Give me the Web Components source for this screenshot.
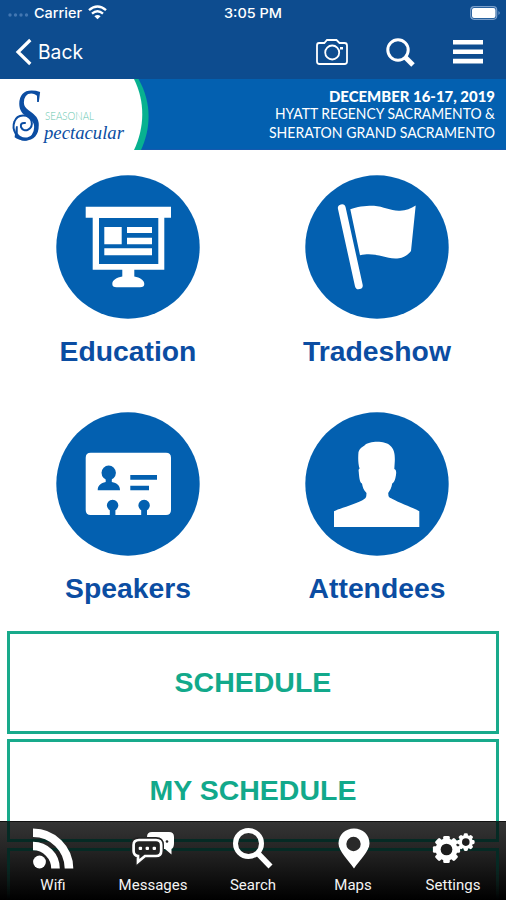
<!DOCTYPE html>
<html lang="en">
<head>
<meta charset="utf-8">
<title>Seasonal Spectacular</title>
<style>
html,body{margin:0;height:900px;overflow:hidden;background:#fff;font-family:"Liberation Sans",Arial,sans-serif}
</style>
</head>
<body>
<event-app></event-app>
<script>
const define = (name, html) => customElements.define(name, class extends HTMLElement {
  constructor() {
    super();
    this.attachShadow({mode: 'open'}).innerHTML = html;
  }
});

/* One line of text fitted to an exact width; the baseline lies on the bottom edge of the box. */
customElements.define('fit-text', class extends HTMLElement {
  connectedCallback() {
    const w = +this.getAttribute('width'), size = +this.getAttribute('size');
    const root = this.attachShadow({mode: 'open'});
    root.innerHTML = `<style>:host{display:block;width:${w}px;height:${size}px}svg{display:block;overflow:visible;margin:-4px -4px 0}</style>
      <svg width="${w + 8}" height="${size * 1.4 + 4}"><text x="4" y="${size + 4}" font-size="${size}" fill="currentColor" textLength="${w}" lengthAdjust="spacingAndGlyphs"></text></svg>`;
    root.querySelector('text').textContent = this.getAttribute('text');
  }
});

const icons = {
  education: `<path d="M29.7 31.7H115V42.7H108.3V94.7H78.3V101.5C84 102.5 88.3 105 88.3 109Q88.3 112.3 84 112.3H60.5Q56.3 112.3 56.3 109C56.3 105 60.5 102.5 66.3 101.5V94.7H36.7V42.7H29.7Z"/><path fill="#0360b0" d="M43 43H102.3V89H43Z"/><path d="M48.3 52H65.7V69.3H48.3ZM71 52H96V58H71ZM71 62.7H96V69.3H71ZM48.3 73.3H96V80.3H48.3Z"/>`,
  tradeshow: `<path d="M36.8 33.2L53.8 110.3" stroke="#fff" stroke-width="7.8" stroke-linecap="round"/><path d="M45.3 34.3C52 31.5 62 30.6 69 30.8C79 31.5 86 36.3 95 35.8C101 35.6 106 33.6 110.7 30.6L106 76C103 80 99 82.5 94 83.2C80 84.8 72 76.5 55 80.3Z"/>`,
  speakers: `<path fill-rule="evenodd" d="M34.7 40.7H110Q115 40.7 115 45.7V98Q115 103 110 103H91V98.3A5.7 5.7 0 1 0 85.2 98.3V103H59.4V98.3A5.7 5.7 0 1 0 53.8 98.3V103H34.7Q29.7 103 29.7 98V45.7Q29.7 40.7 34.7 40.7Z"/><g fill="#0360b0"><circle cx="52.7" cy="60.8" r="7.2"/><path d="M49.7 66H55.8V70C61 71 64 73.5 64 78.3H41.7C41.7 73.5 45 71 49.7 70ZM74.3 63H101V67.7H74.3ZM74.3 73.7H93V78.3H74.3Z"/></g>`,
  attendees: `<path d="M29 115V99.2C36 96 49 92.5 57 88.5C60 87 61.3 85.5 61.3 83.8L61.5 81C58.5 78 57.6 75 57 71.5C54.5 71 54 63 53.7 59.5C53.2 57 54.5 57 54.6 56.5C53 52 53 45 53.5 40C54.5 36.5 57 35 59.5 33.5C64 28.8 80 28.5 85 33.5C89.5 37 90 43 89.8 49L89.3 57C92 58 91.3 62 90.4 66C90 68.5 88.5 71 87.2 71.5C86.5 76 85 78.5 83.2 81L83.5 84C84 85.5 85.5 86 87.5 87C94.5 91 106.5 95 114.3 99.2V115Z"/>`
};
customElements.define('menu-tile', class extends HTMLElement {
  connectedCallback() {
    this.attachShadow({mode: 'open'}).innerHTML = `<style>
      :host{display:flex;flex-direction:column;align-items:center;color:#0b4da2;font-weight:bold;font-size:28.3px;line-height:34px}
      svg{width:144px;height:144px;display:block;margin-bottom:15px}</style>
      <svg viewBox="0 0 144 144" fill="#fff"><circle cx="72" cy="72" r="71.7" fill="#0360b0"/>${icons[this.getAttribute('icon')]}</svg><slot></slot>`;
  }
});

define('outline-button', `<style>
  :host{display:flex;box-sizing:border-box;height:103px;border:3px solid #18aa8b;align-items:center;justify-content:center;color:#12a98b;font-weight:bold;font-size:28.5px;line-height:34px;padding-bottom:2px;background:#fff}
</style><slot></slot>`);

define('status-bar', `<style>
  :host{display:grid;grid-template-columns:1fr auto 1fr;height:25px;align-items:center;color:#fff}
  .l,.r{display:flex;align-items:center}.l{padding-left:7px}.r{justify-content:flex-end;padding-right:5px}
  .dots{margin:4px 5px 0 0}fit-text{font-family:Inter,sans-serif}svg{display:block}
  .l fit-text,.m{margin-top:-4px;font-weight:500}.wifi{margin-left:6px}
</style>
<div class="l"><svg class="dots" width="22" height="4" fill="#4377b2"><circle cx="3" cy="2" r="1.7"/><circle cx="8.5" cy="2" r="1.7"/><circle cx="14" cy="2" r="1.7"/><circle cx="19.5" cy="2" r="1.7"/></svg>
<fit-text text="Carrier" width="48" size="13.5"></fit-text>
<svg class="wifi" width="19" height="15" viewBox="0 0 19 15" fill="none" stroke="#fff" stroke-width="2.4"><path d="M1 5.2Q9.5-2.2 18 5.2M4 8.6Q9.5 3.8 15 8.6"/><path d="M9.5 14.3L6.4 11.3Q9.5 8.6 12.6 11.3Z" fill="#fff" stroke="none"/></svg></div>
<fit-text class="m" text="3:05 PM" width="58" size="13.5"></fit-text>
<div class="r"><svg width="31" height="14"><rect x=".7" y=".7" width="26" height="12.6" rx="3.5" fill="none" stroke="#7a9fcb" stroke-width="1.2"/><rect x="2" y="2" width="23.5" height="10" rx="2" fill="#fff"/><path d="M28.5 5Q31 7 28.5 9Z" fill="#7a9fcb"/></svg></div>`);

define('nav-bar', `<style>
  :host{display:flex;height:54px;align-items:center;padding:0 23px 0 15px;color:#fff;box-sizing:border-box}
  svg{display:block}fit-text{margin:-6px auto 0 6px;font-family:Inter,sans-serif;font-weight:400}
  .s{margin:0 38px 0 38px}
</style>
<svg width="17" height="28" fill="none" stroke="#fff" stroke-width="3.2"><path d="M15.3 2L3 14L15.3 26"/></svg>
<fit-text text="Back" width="45" size="20"></fit-text>
<svg width="32" height="26" fill="none" stroke="#fff" stroke-width="1.8"><path d="M3 4H8.3L11 1H20.5L23.5 4H28.5Q31 4 31 6.5V22.5Q31 25 28.5 25H3.5Q1 25 1 22.5V6.5Q1 4 3 4Z"/><circle cx="16.2" cy="13.5" r="7"/><path d="M25.5 8V10.5" stroke-width="3"/></svg>
<svg class="s" width="29" height="29" fill="none" stroke="#fff"><circle cx="12" cy="12" r="10.2" stroke-width="3"/><path d="M19 19L27 27" stroke-width="5"/></svg>
<svg width="30" height="24" fill="#fff"><path d="M0 0H30V4.6H0ZM0 9.4H30V14H0ZM0 18.8H30V23.4H0Z"/></svg>`);

define('event-banner', `<style>
  :host{display:flex;height:71px;background:#0360b0;color:#fff;justify-content:space-between;position:relative;box-sizing:border-box;border-bottom:1px solid #1559ae}
  .bg{display:block}.logo{position:relative}
  .logo fit-text{position:absolute}
  .s{left:14px;top:-12px;color:#0b4da2;font-family:"Liberation Serif",serif;font-style:italic}
  .n{left:45px;top:29px;color:#63c6ae;font-family:Lato,sans-serif;font-weight:300}
  .p{left:44px;top:41px;color:#0b4da2;font-family:"Liberation Serif",serif;font-style:italic}
  .info{display:flex;flex-direction:column;align-items:flex-end;padding:7px 11px 0 0;gap:2.9px;font-family:Lato,sans-serif}
  .info fit-text:first-child{font-weight:900}
</style>
<div class="logo"><svg class="bg" width="150" height="71"><path d="M134 0H138.5C152 24 151 49 141 71H134Z" fill="#08b190"/><path d="M0 0H134C145 22 145 48 134 71H0Z" fill="#fff"/><path d="M27 60.5C18 62.5 11 51 14.5 42.5C17 35 29 34 31.5 42C33.5 50 24 55 21 48Q20 43.5 25 44" fill="none" stroke="#0b4da2" stroke-width="2" stroke-linecap="round"/></svg>
<fit-text class="s" text="S" width="27" size="73"></fit-text>
<fit-text class="n" text="SEASONAL" width="49" size="11.5"></fit-text>
<fit-text class="p" text="pectacular" width="80" size="18.5"></fit-text></div>
<div class="info"><fit-text text="DECEMBER 16-17, 2019" width="166" size="15.5"></fit-text><fit-text text="HYATT REGENCY SACRAMENTO &amp;" width="220" size="15.3"></fit-text><fit-text text="SHERATON GRAND SACRAMENTO" width="226" size="15.3"></fit-text></div>`);

const gear = (cx, cy, r, n, w) => {
  let teeth = '';
  for (let i = 0; i < n; i++) teeth += `<rect x="${cx - w / 2}" y="${cy - r}" width="${w}" height="${r}" rx="1.4" transform="rotate(${i * 360 / n} ${cx} ${cy})"/>`;
  return `<g fill="#fff">${teeth}<circle cx="${cx}" cy="${cy}" r="${r * .8}"/></g><circle cx="${cx}" cy="${cy}" r="${r * .43}" fill="#1d1d1d"/>`;
};
const tabs = {
  wifi: `<g fill="none" stroke="#fff" stroke-width="8.6"><path d="M4 5.8A36 36 0 0 1 40 41.5"/><path d="M4 19A22.5 22.5 0 0 1 26.5 41.5"/></g><circle cx="10.5" cy="35" r="6.4" fill="#fff"/>`,
  messages: `<g transform="translate(0 -3)"><path d="M23 8H40Q45 8 45 13V19Q45 24 42.5 25V30.5L36 25H23Q18 25 18 20V13Q18 8 23 8Z" fill="#fff"/><g fill="#222"><circle cx="32" cy="16.5" r="1.2"/><circle cx="38" cy="17.5" r="1.3"/></g><path d="M10 14.5H27Q33.5 14.5 33.5 21V27Q33.5 33.5 27 33.5H17L8 40V33.5Q3 33 3 27V21Q3 14.5 10 14.5Z" fill="#222" stroke="#222" stroke-width="3"/><path d="M10 16H27Q32.2 16 32.2 21V27Q32.2 32 27 32H16L9 37.8V32Q4.6 31.4 4.6 27V21Q4.6 16 10 16Z" fill="#222" stroke="#fff" stroke-width="2.7"/><g fill="#fff"><rect x="9.7" y="22.7" width="3.4" height="3.4" rx="1"/><rect x="16.6" y="22.7" width="3.4" height="3.4" rx="1"/><rect x="23.6" y="22.7" width="3.4" height="3.4" rx="1"/></g></g>`,
  search: `<g fill="none" stroke="#fff"><circle cx="19.5" cy="16.5" r="13" stroke-width="5"/><path d="M28.5 26L41.5 39.5" stroke-width="5.6"/></g>`,
  maps: `<path d="M25 1.5C16 1.5 9.5 8 9.5 16.5C9.5 24 20 34 25 41.5C30 34 40.5 24 40.5 16.5C40.5 8 34 1.5 25 1.5Z" fill="#fff"/><circle cx="24.5" cy="17" r="7.2" fill="#292929"/>`,
  settings: gear(17.5, 22.5, 13.6, 8, 6.6) + gear(36.8, 15.1, 8.8, 8, 4.2)
};
customElements.define('tab-item', class extends HTMLElement {
  connectedCallback() {
    this.attachShadow({mode: 'open'}).innerHTML = `<style>
      :host{display:flex;flex-direction:column;align-items:center;color:#f4f4f4;font:15px/20px Roboto,sans-serif}
      svg{display:block;margin-top:6px;width:48px;height:43px;margin-bottom:5px}</style>
      <svg viewBox="0 0 48 43">${tabs[this.getAttribute('icon')]}</svg><slot></slot>`;
  }
});
define('tab-bar', `<style>
  :host{display:grid;grid-template-columns:repeat(5,100px);justify-content:center;height:79px;background:linear-gradient(#353535,#252525 35%,#000);box-shadow:inset 0 1px #111;position:relative}
  .under{position:absolute;left:7px;right:7px;top:0;height:79px}
  .under i{position:absolute;box-sizing:border-box;left:0;right:0;border:3px solid #052a24}
  .under .a{top:0;height:21px;border-top:0}.under .b{top:27px;height:52px;border-bottom:0;-webkit-mask:linear-gradient(#000 30%,transparent)}
  tab-item{position:relative}
</style><div class="under"><i class="a"></i><i class="b"></i></div>
<tab-item icon="wifi">Wifi</tab-item><tab-item icon="messages">Messages</tab-item><tab-item icon="search">Search</tab-item><tab-item icon="maps">Maps</tab-item><tab-item icon="settings">Settings</tab-item>`);

define('event-app', `<style>
  :host{display:flex;flex-direction:column;width:506px;height:900px;background:#fff;overflow:hidden}
  header{background:#0d4c8f}
  main{flex:1;min-height:0;overflow:hidden}
  .tiles{display:grid;grid-template-columns:249px 249px;grid-auto-rows:237px;padding:25px 0 0 3.5px;height:456px}
  .list{display:grid;gap:5px;padding:0 7px}
</style>
<header><status-bar></status-bar><nav-bar></nav-bar></header>
<event-banner></event-banner>
<main><div class="tiles"><menu-tile icon="education">Education</menu-tile><menu-tile icon="tradeshow">Tradeshow</menu-tile><menu-tile icon="speakers">Speakers</menu-tile><menu-tile icon="attendees">Attendees</menu-tile></div>
<div class="list"><outline-button>SCHEDULE</outline-button><outline-button>MY SCHEDULE</outline-button></div></main>
<tab-bar></tab-bar>`);
</script>
</body>
</html>
